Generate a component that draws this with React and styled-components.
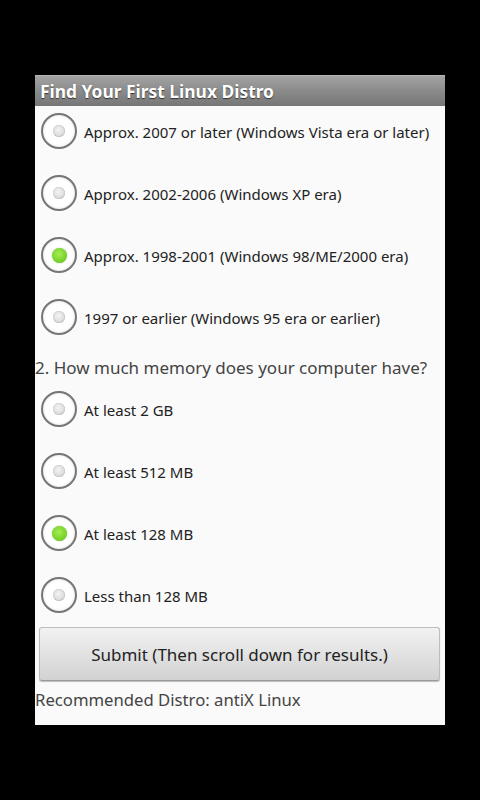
import React, { useState } from "react";
import styled, { createGlobalStyle } from "styled-components";

const GlobalStyle = createGlobalStyle`
  html, body {
    margin: 0;
    padding: 0;
    background: #000;
    font-family: "Noto Sans", "Open Sans", sans-serif;
  }
`;

const yearOptions = [
  "Approx. 2007 or later (Windows Vista era or later)",
  "Approx. 2002-2006 (Windows XP era)",
  "Approx. 1998-2001 (Windows 98/ME/2000 era)",
  "1997 or earlier (Windows 95 era or earlier)",
];

const memoryOptions = [
  "At least 2 GB",
  "At least 512 MB",
  "At least 128 MB",
  "Less than 128 MB",
];

const RadioGroup = ({ options, value, onChange }) => (
  <StGroup>
    {options.map((label, i) => (
      <StRow key={label} onClick={() => onChange(i)}>
        <StRadio>
          <StDot $checked={value === i} />
        </StRadio>
        <StLabel>{label}</StLabel>
      </StRow>
    ))}
  </StGroup>
);

const App = () => {
  const [year, setYear] = useState(2);
  const [memory, setMemory] = useState(2);

  return (
    <>
      <GlobalStyle />
      <StScreen>
        <StWindow>
          <StTitleBar>Find Your First Linux Distro</StTitleBar>
          <RadioGroup options={yearOptions} value={year} onChange={setYear} />
          <StQuestion>2. How much memory does your computer have?</StQuestion>
          <RadioGroup
            options={memoryOptions}
            value={memory}
            onChange={setMemory}
          />
          <StButton>Submit (Then scroll down for results.)</StButton>
          <StResult>Recommended Distro: antiX Linux</StResult>
        </StWindow>
      </StScreen>
    </>
  );
};

export default App;

const StScreen = styled.div`
  width: 480px;
  height: 800px;
  background: #000;
  padding-top: 75px;
  box-sizing: border-box;
`;

const StWindow = styled.div`
  width: 410px;
  margin-left: 35px;
  background: #fafafa;
  display: flex;
  flex-direction: column;
  padding-bottom: 12px;
`;

const StTitleBar = styled.div`
  height: 31px;
  box-sizing: border-box;
  padding-left: 5px;
  display: flex;
  align-items: center;
  background: linear-gradient(#a3a3a3, #8a8a8a 50%, #767676);
  border-top: 1px solid #b5b5b5;
  color: #fff;
  font-size: 17.4px;
  font-weight: 700;
  text-shadow: 0 1px 1px rgba(0, 0, 0, 0.6);
`;

const StGroup = styled.div`
  display: flex;
  flex-direction: column;
  gap: 12px;
`;

const StRow = styled.div`
  height: 50px;
  display: flex;
  align-items: center;
  padding-left: 6px;
  gap: 7px;
  cursor: pointer;
`;

const StRadio = styled.div`
  width: 36px;
  height: 36px;
  box-sizing: border-box;
  border-radius: 50%;
  border: 2px solid #767676;
  background: radial-gradient(circle, #ffffff 55%, #f0f0f0 100%);
  box-shadow: inset 0 0 2px rgba(0, 0, 0, 0.15);
  display: flex;
  align-items: center;
  justify-content: center;
  flex-shrink: 0;
`;

const StDot = styled.div`
  width: ${(p) => (p.$checked ? "15px" : "12px")};
  height: ${(p) => (p.$checked ? "15px" : "12px")};
  border-radius: 50%;
  background: ${(p) =>
    p.$checked
      ? "radial-gradient(circle at 45% 40%, #a6ec55, #78d42a 60%, #55a815)"
      : "radial-gradient(circle at 45% 40%, #f4f4f4, #dcdcdc 60%, #a9a9a9)"};
  box-shadow: ${(p) =>
    p.$checked ? "0 0 1px #4b8f10" : "inset 0 0 1px rgba(0,0,0,0.35)"};
`;

const StLabel = styled.span`
  font-size: 15px;
  color: #222;
  white-space: nowrap;
  margin-top: 2px;
`;

const StQuestion = styled.div`
  margin-top: 13px;
  margin-bottom: 3px;
  line-height: 26px;
  font-size: 17px;
  color: #444;
  white-space: nowrap;
`;

const StButton = styled.button`
  margin: 7px 5px 0 4px;
  height: 54px;
  border: 1px solid #bdbdbd;
  border-bottom-color: #9a9a9a;
  border-radius: 3px;
  background: linear-gradient(#f2f2f2, #e2e2e2 50%, #d2d2d2);
  box-shadow: 0 1px 1px rgba(0, 0, 0, 0.25);
  font-family: "Noto Sans", "Open Sans", sans-serif;
  font-size: 17px;
  color: #222;
  cursor: pointer;
`;

const StResult = styled.div`
  margin-top: 6px;
  line-height: 26px;
  font-size: 16.7px;
  color: #444;
  white-space: nowrap;
`;
